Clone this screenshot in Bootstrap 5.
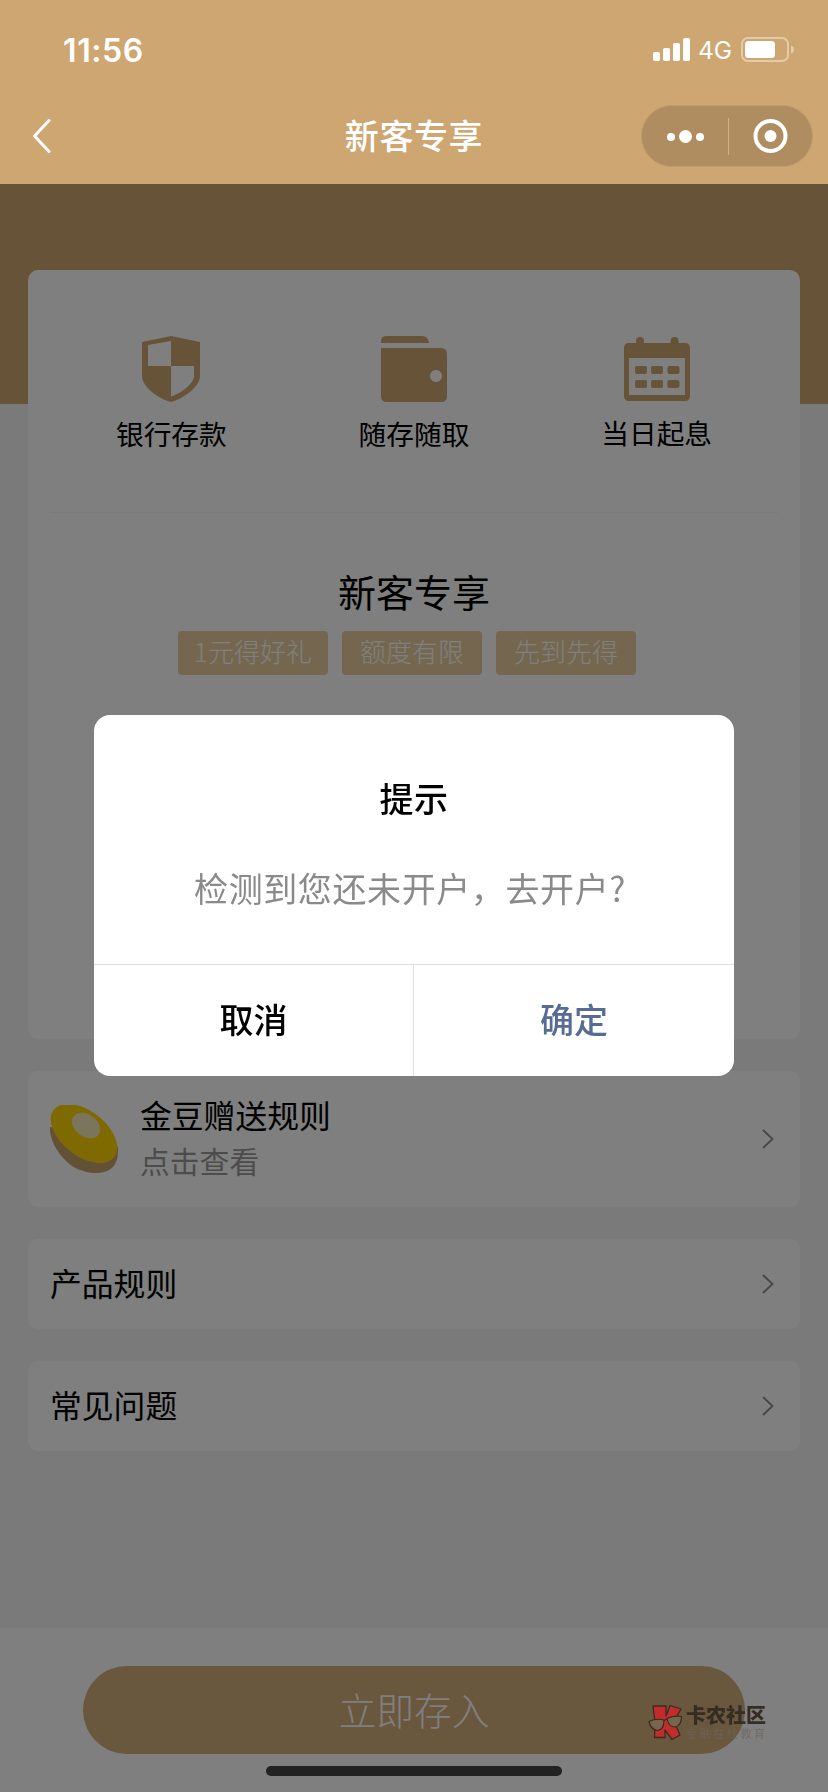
<!DOCTYPE html>
<html lang="zh-CN">
<head>
<meta charset="utf-8">
<meta name="viewport" content="width=device-width, initial-scale=1">
<title>新客专享</title>
<link rel="stylesheet" href="https://cdn.jsdelivr.net/npm/bootstrap@5.3.0/dist/css/bootstrap.min.css">
<style>
:root { --gold:#cea671; }
body { font-family:"Noto Sans CJK SC",sans-serif; background:#f5f5f5; color:#000; width:828px; height:1792px; overflow:hidden; line-height:1; }
svg { display:block; flex:none; }
.topbar { height:184px; background:var(--gold); color:#fff; z-index:1; }
.statusbar { height:88px; padding:12px 33px 0 63px; }
.clock { font:600 32px/1 Inter,sans-serif; letter-spacing:.6px; padding-top:1px; }
.net { font:400 24.5px/1 Inter,sans-serif; margin:1px 9px 0 7px; }
.navrow { height:96px; display:grid; grid-template-columns:1fr auto 1fr; align-items:center; padding:0 15px; }
.navrow h1 { font-size:34px; font-weight:500; letter-spacing:.6px; line-height:50px; margin:-3px 0 0; }
.back { margin-left:15px; }
.capsule { width:172px; height:62px; background:#af8d60; border:1px solid #bd9a6b; border-radius:31px; }
.sep { width:1px; height:37px; background:#cbb08a; }
.band { height:220px; background:var(--gold); }
.page-body { margin-top:-134px; padding:0 28px; }
.panel { background:#fff; border-radius:10px; }
.hero { height:769px; padding:66px 22px 0; }
.feat { height:177px; border-bottom:1px solid #f5f5f5; margin:0; }
.feat > div { padding:0; }
.feat p { font-size:27.7px; line-height:40px; margin:10.5px 0 0; }
.feat svg { fill:var(--gold); }
.feat .up p { margin-top:9.5px; }
.hero h2 { font-size:38px; font-weight:400; line-height:56px; margin:50px 0 0; }
.tagrow { margin:12px 0 0 -14px; gap:14px; }
.tagx { background:#eacf9f; color:#fff; font-size:26px; font-weight:300; line-height:40px; height:44px; width:140px; text-align:center; border-radius:4px; }
.tagx.wide { width:150px; }
.cell { padding:0 26.5px 0 22px; height:90px; margin-top:32px; font-size:31.8px; }
.cell.tall { height:136px; }
.cell .ttl { line-height:46px; padding-bottom:4px; }
.cell .sub { font-size:29.8px; line-height:42px; color:#999; padding-bottom:4px; margin-top:-2px; }
.cell .pair { margin-left:22px; margin-top:-2px; }
.footbar { height:164px; background:#fff; padding-top:38px; margin-top:177px; }
.btn-gold { width:662px; height:88px; border-radius:44px; background:#d3ae7c; color:#fff; font-size:37.8px; font-weight:300; line-height:86px; padding:0 0 2px; border:0; display:block; margin:0 auto; }
.veil { position:fixed; inset:184px 0 0; background:rgba(0,0,0,.5); }
.dialogx { position:fixed; left:94px; top:715px; width:640px; height:361px; background:#fff; border-radius:16px; overflow:hidden; }
.dialogx .body-part { height:249px; padding-top:58px; }
.dialogx h3 { font-size:34px; font-weight:500; line-height:50px; margin:0; letter-spacing:.4px; }
.dialogx .msg { font-size:34px; line-height:50px; letter-spacing:.6px; color:#8a8a8a; margin:39.5px 0 0; padding-right:8px; }
.dialogx .acts { height:112px; border-top:1px solid #dedede; font-size:34px; font-weight:500; }
.dialogx .acts > div { line-height:108px; }
.dialogx .ok { color:#576b95; }
.homebar { position:fixed; left:266px; top:1766px; width:296px; height:10px; border-radius:5px; background:#222; }
.wm { position:fixed; left:647px; top:1702px; }
.wm-name { font-size:20px; font-weight:900; line-height:24px; color:#352c24; padding-top:1px; }
.wm-sub { font-size:11px; line-height:12px; color:#6b665f; letter-spacing:2.6px; opacity:.75; }
</style>
</head>
<body>
<header class="topbar position-relative">
  <div class="statusbar d-flex align-items-center justify-content-between">
    <span class="clock">11:56</span>
    <div class="d-flex align-items-center">
      <svg width="38" height="24" viewBox="0 0 38 24" fill="#fff"><rect x="0" y="14" width="7" height="9" rx="1.8"/><rect x="10" y="10" width="7" height="13" rx="1.8"/><rect x="20" y="5" width="7" height="18" rx="1.8"/><rect x="30" y="0" width="7" height="23" rx="1.8"/></svg>
      <span class="net">4G</span>
      <svg width="54" height="26" viewBox="0 0 54 26"><rect x="1" y="1" width="46" height="23" rx="6" fill="none" stroke="#e5cca9" stroke-width="2"/><rect x="4" y="4" width="30" height="17" rx="3.5" fill="#fff"/><path d="M50 8.500q3 1 3 4t-3 4z" fill="#e5cca9"/></svg>
    </div>
  </div>
  <div class="navrow">
    <svg class="back" width="22" height="36" viewBox="0 0 22 36" fill="none" stroke="#fff" stroke-width="3" stroke-linecap="round" stroke-linejoin="round"><path d="M19 2.500 4.500 18l14.500 15.500"/></svg>
    <h1>新客专享</h1>
    <div class="capsule d-flex align-items-center ms-auto">
      <svg width="86" height="60" viewBox="0 0 86 60" fill="#fff"><circle cx="29" cy="31" r="4"/><circle cx="43.500" cy="30.500" r="6.500"/><circle cx="58" cy="31" r="4"/></svg>
      <div class="sep"></div>
      <svg width="83" height="60" viewBox="0 0 83 60"><circle cx="41.500" cy="30" r="15" fill="none" stroke="#fff" stroke-width="4"/><circle cx="41.500" cy="30" r="6" fill="#fff"/></svg>
    </div>
  </div>
</header>
<div class="band"></div>
<main class="page-body position-relative">
  <section class="panel hero">
    <div class="row feat text-center">
      <div class="col-4">
        <svg class="mx-auto" width="58" height="66" viewBox="0 0 58 66"><path fill-rule="evenodd" d="M29 0 58 6V40C58 51 41 63 29 66 17 63 0 51 0 40V6ZM29 5 6 9V30H29ZM29 30V60.500C38 58 52 48 52 40V30Z"/></svg>
        <p>银行存款</p>
      </div>
      <div class="col-4">
        <svg class="mx-auto" width="66" height="66" viewBox="0 0 66 66"><path d="M0 7V5Q0 0 6 0H41Q47 0 48 7Z"/><path fill-rule="evenodd" d="M0 12H60Q66 12 66 18V60Q66 66 60 66H6Q0 66 0 60ZM55 34a6 6 0 1 0 .01 0Z"/></svg>
        <p>随存随取</p>
      </div>
      <div class="col-4 up">
        <svg class="mx-auto" width="66" height="66" viewBox="0 0 66 66"><path fill-rule="evenodd" d="M12 7V5a4 4 0 0 1 8 0V7H46.500V5a4 4 0 0 1 8 0V7H61Q66 7 66 12V60Q66 65 61 65H5Q0 65 0 60V12Q0 7 5 7ZM5 22V59H61V22Z"/><g><rect x="11" y="30" width="12" height="8" rx="2"/><rect x="27" y="30" width="12" height="8" rx="2"/><rect x="43.500" y="30" width="12" height="8" rx="2"/><rect x="11" y="44" width="12" height="8" rx="2"/><rect x="27" y="44" width="12" height="8" rx="2"/><rect x="43.500" y="44" width="12" height="8" rx="2"/></g></svg>
        <p>当日起息</p>
      </div>
    </div>
    <h2 class="text-center">新客专享</h2>
    <div class="tagrow d-flex justify-content-center">
      <span class="tagx wide">1元得好礼</span><span class="tagx">额度有限</span><span class="tagx">先到先得</span>
    </div>
  </section>
  <section class="panel cell tall d-flex align-items-center">
    <svg width="68" height="69" viewBox="0 0 68 69"><path d="M0 22C-1 34 8 51 22 61 36 70 60 72 66 57Q68 54 68 42L50 30Z" fill="#c4a26c"/><ellipse cx="34" cy="28.500" rx="38.500" ry="22.500" transform="rotate(38 34 28.500)" fill="#ffd400"/><ellipse cx="36" cy="20.500" rx="15.500" ry="11" transform="rotate(35 36 20.500)" fill="#f4eab8"/></svg>
    <div class="flex-grow-1 pair"><div class="ttl">金豆赠送规则</div><div class="sub">点击查看</div></div>
    <svg width="12" height="20" viewBox="0 0 12 20" fill="none" stroke="#8c8c8c" stroke-width="1.800"><path d="M1 1l9.500 9-9.500 9"/></svg>
  </section>
  <section class="panel cell d-flex align-items-center justify-content-between">
    <div class="ttl">产品规则</div>
    <svg width="12" height="20" viewBox="0 0 12 20" fill="none" stroke="#8c8c8c" stroke-width="1.800"><path d="M1 1l9.500 9-9.500 9"/></svg>
  </section>
  <section class="panel cell d-flex align-items-center justify-content-between">
    <div class="ttl">常见问题</div>
    <svg width="12" height="20" viewBox="0 0 12 20" fill="none" stroke="#8c8c8c" stroke-width="1.800"><path d="M1 1l9.500 9-9.500 9"/></svg>
  </section>
</main>
<footer class="footbar"><button class="btn btn-gold" type="button">立即存入</button></footer>

<div class="veil"></div>
<div class="dialogx text-center" role="dialog">
  <div class="body-part"><h3>提示</h3><p class="msg">检测到您还未开户，去开户?</p></div>
  <div class="acts d-flex"><div class="w-50 border-end">取消</div><div class="w-50 ok">确定</div></div>
</div>
<div class="wm d-flex">
  <svg width="36" height="40" viewBox="0 0 36 40" stroke="#3b2a20" stroke-linejoin="round"><path d="M6 4H19V14L23 3.500 34 7 27 19 33 33 25 37.500 18 28V35.500H7.500L8 20Z" fill="#c22c2b" stroke-width="1.300"/><g fill="#75674e" stroke-width="1.200"><path d="M2 19.500Q9 16 17 18 17 28 10.500 28.500 4 28 2 19.500Z"/><path d="M20 16.500Q27 13 34.500 14.500 34.500 24 28 25 21.500 25 20 16.500Z"/><path d="M17 18.500 20 17"/></g></svg>
  <div style="padding-left:3px"><div class="wm-name">卡农社区</div><div class="wm-sub">金融在线教育</div></div>
</div>
<div class="homebar"></div>
<script src="https://cdn.jsdelivr.net/npm/bootstrap@5.3.0/dist/js/bootstrap.bundle.min.js"></script>
</body>
</html>
